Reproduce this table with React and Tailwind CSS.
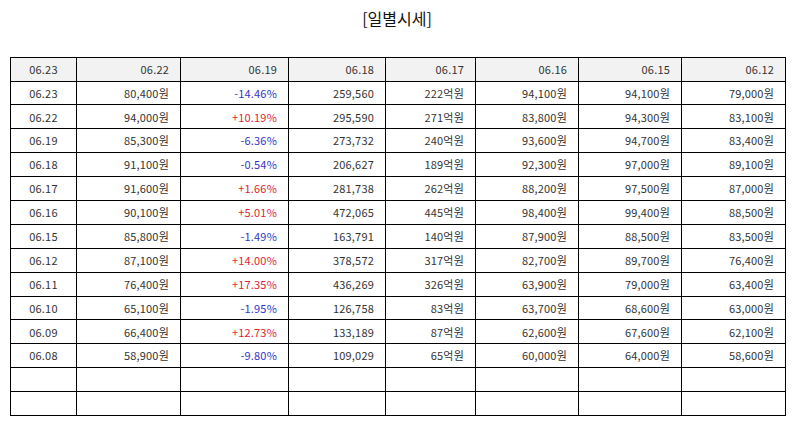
const header = ['06.23', '06.22', '06.19', '06.18', '06.17', '06.16', '06.15', '06.12'];

const rows = [
  ['06.23', '80,400원', '-14.46%', '259,560', '222억원', '94,100원', '94,100원', '79,000원'],
  ['06.22', '94,000원', '+10.19%', '295,590', '271억원', '83,800원', '94,300원', '83,100원'],
  ['06.19', '85,300원', '-6.36%', '273,732', '240억원', '93,600원', '94,700원', '83,400원'],
  ['06.18', '91,100원', '-0.54%', '206,627', '189억원', '92,300원', '97,000원', '89,100원'],
  ['06.17', '91,600원', '+1.66%', '281,738', '262억원', '88,200원', '97,500원', '87,000원'],
  ['06.16', '90,100원', '+5.01%', '472,065', '445억원', '98,400원', '99,400원', '88,500원'],
  ['06.15', '85,800원', '-1.49%', '163,791', '140억원', '87,900원', '88,500원', '83,500원'],
  ['06.12', '87,100원', '+14.00%', '378,572', '317억원', '82,700원', '89,700원', '76,400원'],
  ['06.11', '76,400원', '+17.35%', '436,269', '326억원', '63,900원', '79,000원', '63,400원'],
  ['06.10', '65,100원', '-1.95%', '126,758', '83억원', '63,700원', '68,600원', '63,000원'],
  ['06.09', '66,400원', '+12.73%', '133,189', '87억원', '62,600원', '67,600원', '62,100원'],
  ['06.08', '58,900원', '-9.80%', '109,029', '65억원', '60,000원', '64,000원', '58,600원'],
  ['', '', '', '', '', '', '', ''],
  ['', '', '', '', '', '', '', ''],
];

const widths = ['w-[66px]', 'w-[104px]', 'w-[108px]', 'w-[97px]', 'w-[90px]', 'w-[103px]', 'w-[103px]', 'w-[104px]'];

// change column gets red for gains, blue for losses
function tone(v) {
  if (v.startsWith('+')) return 'text-[#e0242e]';
  if (v.startsWith('-')) return 'text-[#3434c8]';
  return '';
}

export default function App() {
  return (
    <div className="w-[794px] h-[425px] bg-white font-['Noto_Sans_CJK_KR','Noto_Sans',sans-serif] text-[#333]">
      <h1 className="pt-[6px] text-center text-[16px] leading-[24px] text-[#111]">[일별시세]</h1>
      <table className="ml-[10px] mt-[27px] w-[775px] table-fixed border-collapse text-[11px] tracking-[0.2px]">
        <colgroup>
          {widths.map((w, i) => (
            <col key={i} className={w} />
          ))}
        </colgroup>
        <thead>
          <tr className="h-[23.5px] bg-[#f2f2f2]">
            {header.map((h, i) => (
              <th
                key={i}
                className={`border border-black font-normal ${i === 0 ? 'text-center' : 'pr-[11px] text-right'}`}
              >
                {h}
              </th>
            ))}
          </tr>
        </thead>
        <tbody>
          {rows.map((r, ri) => (
            <tr key={ri} className="h-[23.9px]">
              {r.map((c, ci) => (
                <td
                  key={ci}
                  className={`border border-black ${ci === 0 ? 'text-center' : 'pr-[11px] text-right'} ${ci === 2 ? tone(c) : ''}`}
                >
                  {c}
                </td>
              ))}
            </tr>
          ))}
        </tbody>
      </table>
    </div>
  );
}
